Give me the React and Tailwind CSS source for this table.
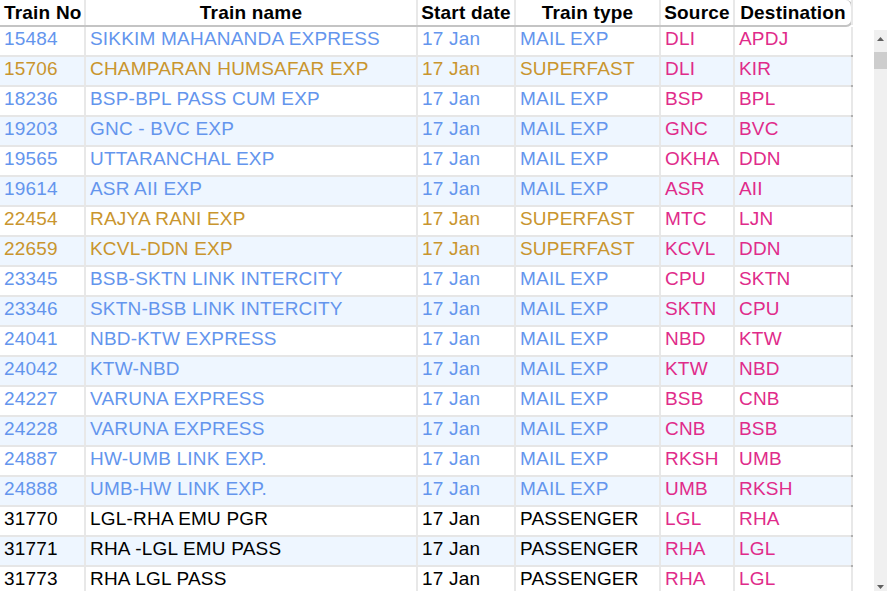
import React from 'react';

const trains = [
  ['15484', 'SIKKIM MAHANANDA EXPRESS', '17 Jan', 'MAIL EXP', 'DLI', 'APDJ'],
  ['15706', 'CHAMPARAN HUMSAFAR EXP', '17 Jan', 'SUPERFAST', 'DLI', 'KIR'],
  ['18236', 'BSP-BPL PASS CUM EXP', '17 Jan', 'MAIL EXP', 'BSP', 'BPL'],
  ['19203', 'GNC - BVC EXP', '17 Jan', 'MAIL EXP', 'GNC', 'BVC'],
  ['19565', 'UTTARANCHAL EXP', '17 Jan', 'MAIL EXP', 'OKHA', 'DDN'],
  ['19614', 'ASR AII EXP', '17 Jan', 'MAIL EXP', 'ASR', 'AII'],
  ['22454', 'RAJYA RANI EXP', '17 Jan', 'SUPERFAST', 'MTC', 'LJN'],
  ['22659', 'KCVL-DDN EXP', '17 Jan', 'SUPERFAST', 'KCVL', 'DDN'],
  ['23345', 'BSB-SKTN LINK INTERCITY', '17 Jan', 'MAIL EXP', 'CPU', 'SKTN'],
  ['23346', 'SKTN-BSB LINK INTERCITY', '17 Jan', 'MAIL EXP', 'SKTN', 'CPU'],
  ['24041', 'NBD-KTW EXPRESS', '17 Jan', 'MAIL EXP', 'NBD', 'KTW'],
  ['24042', 'KTW-NBD', '17 Jan', 'MAIL EXP', 'KTW', 'NBD'],
  ['24227', 'VARUNA EXPRESS', '17 Jan', 'MAIL EXP', 'BSB', 'CNB'],
  ['24228', 'VARUNA EXPRESS', '17 Jan', 'MAIL EXP', 'CNB', 'BSB'],
  ['24887', 'HW-UMB LINK EXP.', '17 Jan', 'MAIL EXP', 'RKSH', 'UMB'],
  ['24888', 'UMB-HW LINK EXP.', '17 Jan', 'MAIL EXP', 'UMB', 'RKSH'],
  ['31770', 'LGL-RHA EMU PGR', '17 Jan', 'PASSENGER', 'LGL', 'RHA'],
  ['31771', 'RHA -LGL EMU PASS', '17 Jan', 'PASSENGER', 'RHA', 'LGL'],
  ['31773', 'RHA LGL PASS', '17 Jan', 'PASSENGER', 'RHA', 'LGL'],
];

const typeColor = {
  'MAIL EXP': 'text-[#6495ed]',
  SUPERFAST: 'text-[#c9952e]',
  PASSENGER: 'text-black',
};

const cols = 'grid grid-cols-[86px_332px_98px_145px_74px_118px]';
const cell = 'flex items-center px-[4px] border-r-2 border-[#e8e8e8] whitespace-nowrap overflow-hidden';

export default function App() {
  return (
    <div className="w-[887px] h-[591px] overflow-hidden bg-white font-['Liberation_Sans',Arial,sans-serif] text-[19px] tracking-[0.2px] leading-none">
      <div className="flex">
        <div className={`${cols} w-[853px] h-[27px] border-b-2 border-r-2 border-[#c4c4c4] rounded-r-[7px] font-bold text-black`}>
          <div className={`${cell} justify-start`}>Train No</div>
          <div className={`${cell} justify-center`}>Train name</div>
          <div className={`${cell} justify-center`}>Start date</div>
          <div className={`${cell} justify-center`}>Train type</div>
          <div className={`${cell} justify-center`}>Source</div>
          <div className={`${cell} justify-center border-r-0`}>Destination</div>
        </div>
      </div>
      <div className="flex">
        <div className="w-[853px] border-r-2 border-[#b0b0b0]">
          {trains.map((t, i) => (
            <div
              key={t[0]}
              className={`${cols} h-[30px] border-b-2 border-[#e6e6e6] ${i % 2 ? 'bg-[#eef6ff]' : 'bg-white'} ${typeColor[t[3]]}`}
            >
              <div className={`${cell} pb-[6px]`}>{t[0]}</div>
              <div className={`${cell} pb-[6px]`}>{t[1]}</div>
              <div className={`${cell} pb-[6px]`}>{t[2]}</div>
              <div className={`${cell} pb-[6px]`}>{t[3]}</div>
              <div className={`${cell} pb-[6px] text-[#e02b8a]`}>{t[4]}</div>
              <div className={`${cell} pb-[6px] text-[#e02b8a] border-r-0`}>{t[5]}</div>
            </div>
          ))}
        </div>
        <div className="ml-auto w-[13px] mt-[3px] bg-[#f0f0f0] flex flex-col items-center">
          <svg width="7" height="4" viewBox="0 0 7 4" className="mt-[7px]">
            <path d="M0 4 L3.5 0 L7 4 Z" fill="#606060" />
          </svg>
          <div className="w-full h-[17px] mt-[11px] bg-[#cdcdcd]" />
          <div className="flex-1" />
          <svg width="7" height="4" viewBox="0 0 7 4" className="mb-[8px]">
            <path d="M0 0 L3.5 4 L7 0 Z" fill="#606060" />
          </svg>
        </div>
      </div>
    </div>
  );
}
